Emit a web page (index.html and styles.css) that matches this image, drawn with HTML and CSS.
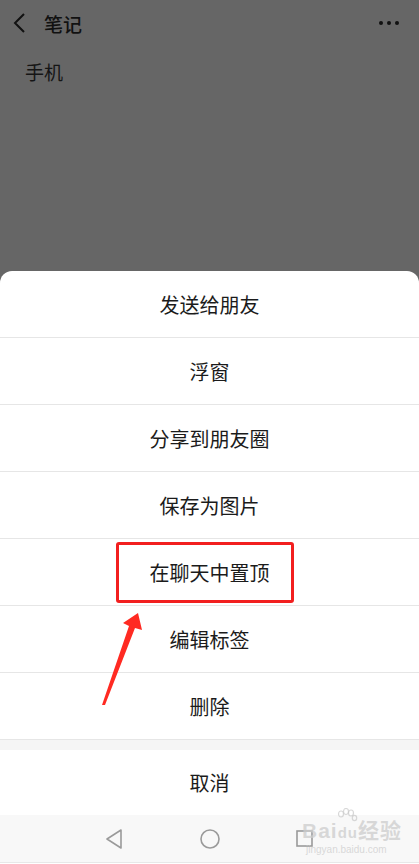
FILE: index.html
```html
<!DOCTYPE html>
<html lang="zh">
<head>
<meta charset="utf-8">
<link rel="stylesheet" href="styles.css">
</head>
<body>
<div class="screen">
  <div class="topbar">
    <svg class="back" width="14" height="20" viewBox="0 0 14 20"><path d="M12 1 L3 10 L12 19" fill="none" stroke="#111" stroke-width="2"/></svg>
    <span class="title">笔记</span>
    <span class="more"><i></i><i></i><i></i></span>
  </div>
  <div class="note">手机</div>
  <div class="spacer"></div>
  <div class="sheet">
    <div class="row">发送给朋友</div>
    <div class="row">浮窗</div>
    <div class="row">分享到朋友圈</div>
    <div class="row">保存为图片</div>
    <div class="row">在聊天中置顶<span class="highlight"></span></div>
    <div class="row">编辑标签</div>
    <div class="row">删除</div>
    <div class="gap"></div>
    <div class="cancel">取消</div>
  </div>
  <div class="navbar">
    <svg width="20" height="22" viewBox="0 0 20 22"><path d="M17 2 L3 11 L17 20 Z" fill="none" stroke="#9a9a9a" stroke-width="1.6" stroke-linejoin="round"/></svg>
    <svg width="22" height="22" viewBox="0 0 22 22"><circle cx="11" cy="11" r="9" fill="none" stroke="#9a9a9a" stroke-width="1.6"/></svg>
    <svg width="20" height="20" viewBox="0 0 20 20"><rect x="2" y="2" width="15" height="15" fill="none" stroke="#9a9a9a" stroke-width="1.6"/></svg>
  </div>
  <div class="bottomline"></div>
  <div class="watermark">
    <svg class="paw" width="22" height="16" viewBox="0 0 22 16"><g fill="none" stroke="rgba(200,200,200,0.7)" stroke-width="1.2"><ellipse cx="5" cy="6" rx="2.5" ry="3"/><ellipse cx="10" cy="3.5" rx="2.5" ry="3"/><ellipse cx="15" cy="5" rx="2.5" ry="3"/><ellipse cx="18.5" cy="10" rx="2.2" ry="2.6"/></g></svg>
    <span class="wm-logo">Bai<b>du</b>经验</span><span class="wm-url">jingyan.baidu.com</span>
  </div>
  <svg class="arrow" width="50" height="100" viewBox="0 0 50 100"><polygon points="38,1 42,18 35,16 5,93 2,93 29,14 23,11" fill="#ff2a22"/></svg>
</div>
</body>
</html>
```
FILE: styles.css
```css
* { box-sizing: border-box; }
html, body { margin: 0; padding: 0; }
body {
  font-family: "Noto Sans CJK SC", "Noto Sans", sans-serif;
  background: #fff;
}
.screen {
  position: relative;
  width: 419px;
  height: 864px;
  background: #666666;
  display: flex;
  flex-direction: column;
  overflow: hidden;
}
.topbar {
  height: 46px;
  display: flex;
  align-items: center;
  padding: 0 20px 0 12px;
  flex-shrink: 0;
}
.back { margin-right: 18px; }
.title {
  font-size: 19px;
  font-weight: 500;
  color: #111;
  flex: 1;
  line-height: 1;
}
.more { display: flex; gap: 4px; }
.more i {
  width: 4px; height: 4px; border-radius: 50%;
  background: #111; display: block;
}
.note {
  padding: 14px 0 0 25px;
  font-size: 19px;
  color: #151515;
  line-height: 24px;
}
.spacer { flex: 1; }
.sheet {
  position: relative;
  background: #fff;
  border-radius: 12px 12px 0 0;
  flex-shrink: 0;
}
.row {
  position: relative;
  height: 67px;
  border-bottom: 1px solid #e6e6e6;
  display: flex;
  align-items: center;
  justify-content: center;
  font-size: 20px;
  color: #1b1b1b;
}
.highlight {
  position: absolute;
  left: 116px;
  top: 3px;
  width: 178px;
  height: 61px;
  border: 3px solid #f21f1f;
  border-radius: 3px;
}
.gap { height: 10px; background: #f5f5f5; }
.cancel {
  height: 65px;
  display: flex;
  align-items: center;
  justify-content: center;
  font-size: 20px;
  color: #1b1b1b;
}
.navbar {
  height: 47px;
  background: #f8f8f8;
  display: flex;
  align-items: center;
  justify-content: space-between;
  padding: 0 104px 0 104px;
  flex-shrink: 0;
}
.bottomline {
  height: 2px;
  border-top: 1px solid #e8e8e8;
  background: #fff;
  flex-shrink: 0;
}
.watermark {
  position: absolute;
  left: 302px;
  top: 808px;
  display: flex;
  flex-direction: column;
  align-items: flex-start;
  color: rgba(205,205,205,0.75);
  font-family: "Liberation Sans", "Noto Sans CJK SC", sans-serif;
}
.paw { margin-left: 34px; margin-bottom: -4px; }
.wm-logo { font-size: 21px; font-weight: bold; line-height: 22px; letter-spacing: 1px; }
.wm-logo b { font-size: 15px; }
.wm-url { font-size: 10px; line-height: 12px; padding-left: 4px; }
.arrow {
  position: absolute;
  left: 100px;
  top: 612px;
}
```
